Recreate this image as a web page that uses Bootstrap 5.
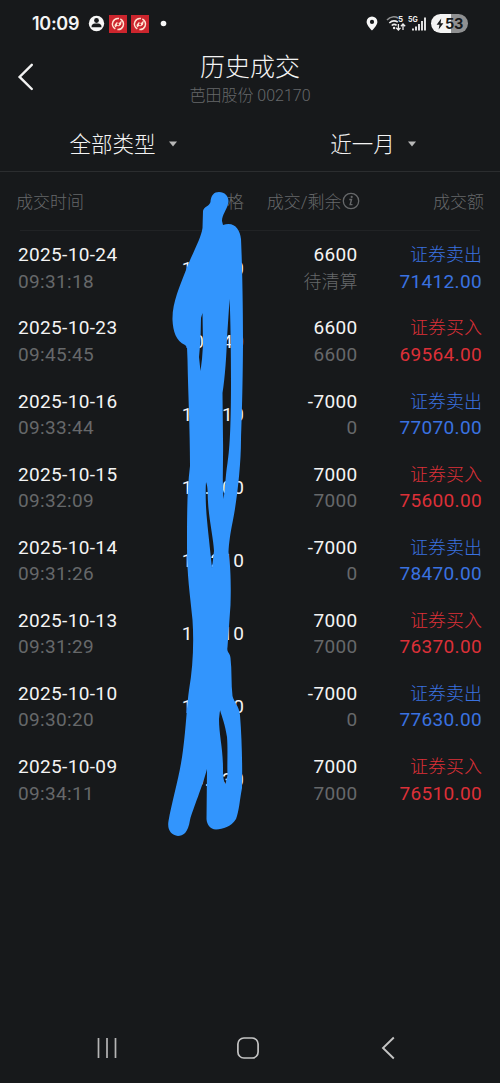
<!DOCTYPE html>
<html lang="zh-CN">
<head>
<meta charset="utf-8">
<meta name="viewport" content="width=device-width, initial-scale=1">
<title>历史成交</title>
<link href="https://cdn.jsdelivr.net/npm/bootstrap@5.3.0/dist/css/bootstrap.min.css" rel="stylesheet">
<style>
  body { background:#17191b; color:#f4f4f4; font-family:Roboto,"Noto Sans CJK SC",sans-serif; height:1083px; overflow:hidden; }
  svg { display:block; flex:none; }
  .status-bar { height:47px; padding:0 32px; }
  .clock { font:600 18px/24px Inter,sans-serif; width:48px; letter-spacing:-.3px; white-space:nowrap; }
  .battery { width:37px; height:19px; border-radius:10px; background:linear-gradient(90deg,#f3f3f3 53%,#8f9091 53%); color:#17191b; font:700 14.5px/19px Inter,sans-serif; letter-spacing:-.4px; }
  .title-bar { height:67px; }
  .back-btn { left:17px; top:15px; }
  .page-title { font-size:25px; line-height:30px; padding-top:6px; font-weight:300; }
  .stock-name { font-size:16px; line-height:20px; color:#66686a; margin-top:3px; font-weight:300; }
  .filters { height:58px; border-bottom:1px solid #2b2d2f; font-size:21.5px; font-weight:300; }
  .filters > div { width:247px; height:57px; }
  .filters > div + div { width:253px; }
  .filters span { padding-top:5px; }
  .filters svg { margin:3px 0 0 12px; }
  .grid-line { display:grid; grid-template-columns:118px 108px 113.5px 1fr; padding:0 18px; }
  .head-line { height:59px; color:#66686a; font-size:17px; font-weight:300; align-items:center; position:relative; padding-top:2px; }
  .head-line::after { content:""; position:absolute; left:20px; right:20px; bottom:0; height:1px; background:#212325; }
  .trade { height:73.1px; font-size:19px; letter-spacing:.35px; align-items:center; padding-top:2.600px; }
  .trade .cell-row { line-height:26.5px; height:26.5px; white-space:nowrap; }
  .trade .price { letter-spacing:.75px; margin-right:-.75px; }
  .trade .zh { font-size:18px; letter-spacing:0; font-weight:300; }
  .dim { color:#66686a; }
  .sell { color:#3a72e0; }
  .buy { color:#dc3038; }
  .scribble { left:0; top:0; pointer-events:none; }
  .nav-keys { height:70px; padding:0 105px 0 96px; }
</style>
</head>
<body class="d-flex flex-column position-relative">
<header>
  <div class="status-bar d-flex align-items-center">
    <span class="clock">10:09</span>
    <svg style="margin-left:8px" width="17" height="17" viewBox="0 0 17 17"><circle cx="8.5" cy="8.5" r="7.7" fill="#f7f7f7"/><circle cx="8.5" cy="5.5" r="2.4" fill="#17191b"/><path d="M3.6 12.3V10.7C4.4 8.7 6.2 8.5 8.5 8.5S12.600 8.700 13.400 10.700V12.300Z" fill="#17191b"/></svg>
    <svg style="margin-left:4px" width="18" height="18" viewBox="0 0 18 18"><g id="app"><path fill="#cc252d" d="M0 0H18V18H0Z"/><circle cx="9" cy="9" r="5.5" fill="none" stroke="#ffe3d2" stroke-width="1.500" stroke-dasharray="15 2.280" transform="rotate(-65 9 9)"/><path d="M5.500 10 7.500 7.200 10 8 13 5 12 9.800 10 11.300 8 11 6 12.500Z" fill="#ffe3d2"/><circle cx="9" cy="9.300" r="1.100" fill="#cc252d"/></g></svg>
    <svg style="margin-left:4px" width="18" height="18" viewBox="0 0 18 18"><use href="#app"/></svg>
    <svg style="margin-left:11px" width="7" height="7"><circle cx="3.500" cy="3.500" r="2.800" fill="#f7f7f7"/></svg>
    <div class="ms-auto d-flex align-items-center">
      <svg width="12" height="15" viewBox="0 0 12 15"><path fill="#f7f7f7" fill-rule="evenodd" d="M6 .5A5.400 5.400 0 0 1 11.400 5.900C11.400 9.300 6 14.500 6 14.500S.6 9.300.6 5.900A5.400 5.400 0 0 1 6 .5ZM6 3.800A2.100 2.100 0 1 0 6 8 2.100 2.100 0 0 0 6 3.800Z"/></svg>
      <svg style="margin-left:8px" width="20" height="17" viewBox="0 0 20 17"><g fill="none" stroke-width="1.600"><path stroke="#909192" d="M1 5C4.500 1.300 9 1.300 12 3"/><path stroke="#ededed" d="M3.300 8C6 5.400 9 5.300 11.800 7.100M5.700 10.500C7.500 9 9 9 10.600 10.400"/><path stroke="#ededed" stroke-width="1.300" d="M12.400 9V15M10.200 12.800 12.400 15 14.500 12.900M17 15V9M14.900 11.200 17 9 19.200 11.200"/></g><circle cx="8.100" cy="13" r="1.200" fill="#ededed"/><text x="12" y="7" font-family="Inter" font-weight="700" font-size="8" fill="#ededed">5</text></svg>
      <svg style="margin-left:2px" width="19" height="17" viewBox="0 0 19 17"><text x="0" y="6.800" font-family="Inter" font-weight="700" font-size="7" fill="#ededed">5G</text><path stroke="#f4f4f4" stroke-width="1.800" d="M5 15.500V13.500M8 15.500V11.500M11 15.500V9M14 15.500V6M17 15.500V2.500"/></svg>
      <div class="battery ms-1 d-flex align-items-center justify-content-center">
        <svg width="8" height="12" viewBox="0 0 8 12"><path fill="#17191b" d="M5.200.5.600 6.700H3.500L2.600 11.500 7.400 5.300H4.600Z"/></svg><span style="margin-left:1px">53</span>
      </div>
    </div>
  </div>
  <div class="title-bar position-relative text-center">
    <svg class="back-btn position-absolute" width="18" height="30" viewBox="0 0 18 30"><path d="M14.800 2.800 2.600 14.900 14.800 27" fill="none" stroke="#f2f2f2" stroke-width="2.400" stroke-linecap="round"/></svg>
    <h1 class="page-title mb-0">历史成交</h1>
    <div class="stock-name">芭田股份 002170</div>
  </div>
</header>
<div class="filters d-flex">
  <div class="d-flex align-items-center justify-content-center"><span>全部类型</span><svg width="10" height="6"><path d="M1 .5H9L5 5.500Z" fill="#b8b8b8"/></svg></div>
  <div class="d-flex align-items-center justify-content-center"><span>近一月</span><svg width="10" height="6"><path d="M1 .5H9L5 5.500Z" fill="#b8b8b8"/></svg></div>
</div>
<main>
  <div class="grid-line head-line text-nowrap">
    <div style="margin-left:-2px">成交时间</div>
    <div class="text-end">价格</div>
    <div class="d-flex align-items-center justify-content-end" style="margin-right:-2px">成交/剩余<svg class="mb-1" width="18" height="18" viewBox="0 0 18 18"><circle cx="9" cy="9" r="7.700" fill="none" stroke="#66686a" stroke-width="1.300"/><path d="M7.300 7.500H9.500L8.200 12.600H10.500" fill="none" stroke="#66686a" stroke-width="1.400"/><circle cx="9.700" cy="4.900" r="1.100" fill="#66686a"/></svg></div>
    <div class="text-end" style="margin-right:-2px">成交额</div>
  </div>
  <div id="trades"></div>
</main>
<footer class="nav-keys mt-auto d-flex align-items-center justify-content-between">
  <svg width="22" height="24"><path d="M2.500 2V22M11 2V22M19.500 2V22" stroke="#b5b5b5" stroke-width="1.700"/></svg>
  <svg class="me-1" width="24" height="24"><rect x="1.900" y="2" width="20.200" height="20" rx="6" fill="none" stroke="#c4c4c4" stroke-width="1.700"/></svg>
  <svg width="14" height="24"><path d="M12.800 1.500 2 12 12.800 22.500" fill="none" stroke="#c4c4c4" stroke-width="1.900"/></svg>
</footer>
<svg class="scribble position-absolute" width="500" height="1083" viewBox="0 0 500 1083">
  <path fill="#3295fd" fill-rule="evenodd" d="M219 192C226 192 230 198 228 204C227 209 222 215 222 221L223 225C234 221 240 229 241 239C242 260 243 300 243 340C243 370 242 415 241 440C241 465 237 500 233 520C230 535 229 543 228.500 552C231 568 231 590 230.500 605L227.500 647C226.500 653 230 652 230.500 658C232 670 231 684 232.500 696C234 702 239 706 240 715C242 740 242.500 770 242 788C240 798 239 812 236 819C231 827 223 829 216 829.500C210 829 207 825 206.500 819L207 769C203 785 193 809 190 820C188 833 183 836 178 836C171 835 167 830 168.500 821C172 801 180 775 183 750C186 728 187 703 189 690C193 668 194 642 192.500 620C190 594 187 575 187 548C187 515 187 490 190 466C190 430 188 390 187.500 360L187 347L185 345C176 341 173 331 172.500 320C172 303 180 286 186 270C191 256 201 239 202.500 228L203 211C204 206 209 207 210.500 202C211 195 214 192 219 192Z
  M202.500 313 203 345 202 359 200.500 371 199 357 200.500 340 201 318Z
  M229.600 299C230.500 320 231 350 231 382C231 420 230 448 227.500 463C225.500 475 225 491 223.500 499C222 479 223.500 460 223 440L222.500 393C225 377 226.500 355 227 338Z
  M206 482C208 487 207.500 492 208 502C209 520 213.500 539 214 551L212 568C211 557 208.500 536 207 520C205.500 505 205.500 490 206 482Z
  M220 710C222 717 225 724 227 737C228 749 227 765 227.500 775L225.500 784C223 780 223 774 223 768C223 748 219 735 219 719Z"/>
</svg>
<script>
  const trades = [
    ['2025-10-24','09:31:18','10.820','6600','待清算','sell','71412.00'],
    ['2025-10-23','09:45:45','10.540','6600','6600','buy','69564.00'],
    ['2025-10-16','09:33:44','11.010','-7000','0','sell','77070.00'],
    ['2025-10-15','09:32:09','10.800','7000','7000','buy','75600.00'],
    ['2025-10-14','09:31:26','11.210','-7000','0','sell','78470.00'],
    ['2025-10-13','09:31:29','10.910','7000','7000','buy','76370.00'],
    ['2025-10-10','09:30:20','11.090','-7000','0','sell','77630.00'],
    ['2025-10-09','09:34:11','10.930','7000','7000','buy','76510.00']
  ];
  document.getElementById('trades').innerHTML = trades.map(([d,t,p,q,r,k,a]) => `
    <div class="grid-line trade">
      <div><div class="cell-row">${d}</div><div class="cell-row dim">${t}</div></div>
      <div class="text-end price">${p}</div>
      <div class="text-end"><div class="cell-row">${q}</div><div class="cell-row dim${r === '待清算' ? ' zh' : ''}">${r}</div></div>
      <div class="text-end ${k}"><div class="cell-row zh">${k === 'sell' ? '证券卖出' : '证券买入'}</div><div class="cell-row">${a}</div></div>
    </div>`).join('');
</script>
<script src="https://cdn.jsdelivr.net/npm/bootstrap@5.3.0/dist/js/bootstrap.bundle.min.js"></script>
</body>
</html>
